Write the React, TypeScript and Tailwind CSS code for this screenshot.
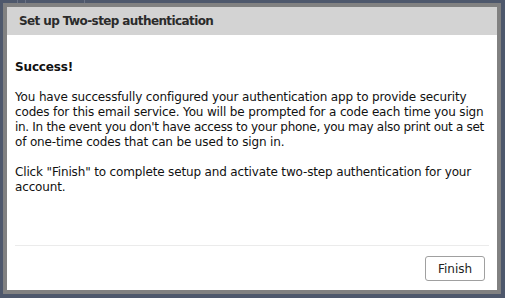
import React from "react";

export default function App() {
  return (
    <div className="relative w-[505px] h-[298px] overflow-hidden bg-[#4e586c]" style={{ fontFamily: '"DejaVu Sans", Verdana, sans-serif' }}>
      {/* faint underlying page hints */}
      <div className="absolute left-[17px] top-0 h-[4px] w-px bg-[#6b7385]" />
      <div className="absolute left-[25px] top-0 h-[4px] w-px bg-[#6b7385]" />
      <div className="absolute left-[84px] top-0 h-[4px] w-px bg-[#6b7385]" />
      <div className="absolute left-[3px] top-[3px] w-[498px] h-[291px] border-[4px] border-[#818181] bg-transparent">
        <div className="flex h-full w-full flex-col bg-white">
          <div className="flex h-[28px] items-center bg-[#d3d3d3] pl-[12px] text-[12px] font-bold tracking-[-0.6px] text-[#2b2b2b]">
            Set up Two-step authentication
          </div>
          <div className="flex flex-1 flex-col px-[8px]">
            <div className="pt-[25px] text-[12px] leading-[15px] tracking-[-0.15px] text-[#111] whitespace-nowrap">
              <p className="font-bold">Success!</p>
              <p className="mt-[15px]">
                You have successfully configured your authentication app to provide security
                <br />
                codes for this email service. You will be prompted for a code each time you sign
                <br />
                <span className="tracking-[-0.3px]">in. In the event you don't have access to your phone, you may also print out a set</span>
                <br />
                of one-time codes that can be used to sign in.
              </p>
              <p className="mt-[15px]">
                Click "Finish" to complete setup and activate two-step authentication for your
                <br />
                account.
              </p>
            </div>
            <div className="mt-auto border-t border-[#ebebeb] flex justify-end pt-[10px] pb-[9px] pr-[4px]">
              <button className="h-[25px] w-[60px] rounded-[3px] border border-[#a0a0a0] bg-white text-[12px] text-[#222]">
                Finish
              </button>
            </div>
          </div>
        </div>
      </div>
    </div>
  );
}
